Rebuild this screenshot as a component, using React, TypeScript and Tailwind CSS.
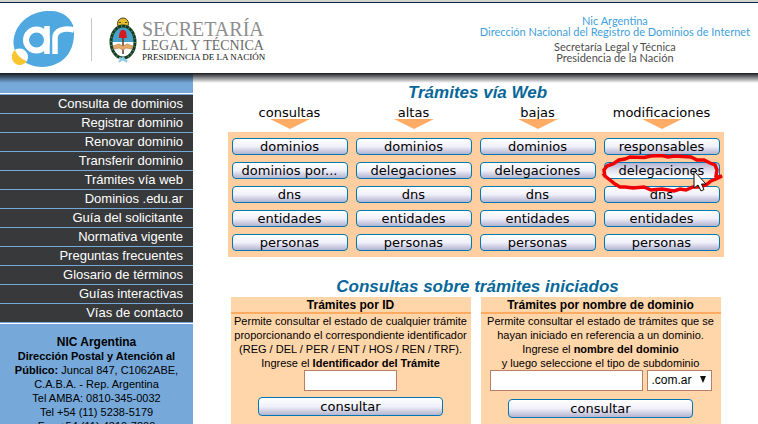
import React from "react";

const menu = [
  "Consulta de dominios",
  "Registrar dominio",
  "Renovar dominio",
  "Transferir dominio",
  "Trámites vía web",
  "Dominios .edu.ar",
  "Guía del solicitante",
  "Normativa vigente",
  "Preguntas frecuentes",
  "Glosario de términos",
  "Guías interactivas",
  "Vías de contacto",
];

const columns = [
  { title: "consultas", items: ["dominios", "dominios por...", "dns", "entidades", "personas"] },
  { title: "altas", items: ["dominios", "delegaciones", "dns", "entidades", "personas"] },
  { title: "bajas", items: ["dominios", "delegaciones", "dns", "entidades", "personas"] },
  { title: "modificaciones", items: ["responsables", "delegaciones", "dns", "entidades", "personas"] },
];

function ArLogo() {
  return (
    <svg width="64" height="58" viewBox="0 0 64 58" role="img" aria-label=".ar" className="shrink-0">
      <path d="M35 0C49 -1 60 6 62 18C63 36 56 51 38 55C20 59 3 49 1.500 33C1 15 16 1 35 0Z" fill="#4fa8df" />
      <circle cx="7.500" cy="46" r="8.500" fill="#fff" />
      <path d="M3 39C-2 43 -1 51 5 53.500C9 55 13 53 15 50C9 48 5 44 3 39Z" fill="#fbc530" />
      <g fill="none" stroke="#fff" strokeWidth="5.500">
        <circle cx="24.500" cy="29" r="10.500" strokeWidth="6" />
        <line x1="35" y1="15" x2="35" y2="43" />
        <path d="M43 43V27C43 20 51 16 62 19" />
      </g>
    </svg>
  );
}

function CoatOfArms() {
  return (
    <svg width="28" height="46" viewBox="0 0 28 46" role="img" aria-label="Escudo nacional" className="shrink-0">
      <circle cx="14" cy="6.500" r="5.500" fill="#e8bd2c" stroke="#4b421d" />
      <path d="M10 5.500h2M16 5.500h2M12 8.500h4" stroke="#5a4514" />
      <ellipse cx="14" cy="25" rx="12" ry="16" fill="#fff" />
      <path d="M2 25C2 15 8 9 14 9S26 15 26 25Z" fill="#46a2cb" />
      <ellipse cx="14" cy="25" rx="12" ry="16" fill="none" stroke="#173c26" strokeWidth="3" />
      <ellipse cx="14" cy="25" rx="12" ry="16" fill="none" stroke="#4b8a4d" strokeWidth="2" strokeDasharray="1 3" />
      <path d="M14 20V37" stroke="#6a3820" strokeWidth="1.500" />
      <path d="M10 21C10 15 12 12 15 13C18 14 17 17 18 21Z" fill="#d71920" />
      <path d="M4 29L10 27L14 29L18 27L24 29L23 32L17 31L14 33L10 31L5 32Z" fill="#e5a968" stroke="#9e693b" strokeWidth=".5" />
      <path d="M10 45L14 41L18 45M10 41L18 44" fill="none" stroke="#8cc9e7" strokeWidth="2" />
    </svg>
  );
}

function PillButton({ label, tall = false, hot = false }: { label: string; tall?: boolean; hot?: boolean }) {
  return (
    <button
      type="button"
      className={`flex w-full items-center justify-center rounded border border-[#0077b3] bg-linear-to-b font-['DejaVu_Sans',sans-serif] text-[13px] leading-none whitespace-nowrap text-black ${
        tall ? "h-[19px]" : "h-[17px]"
      } ${hot ? "from-[#b4b4d0] via-[#e2e2ef] to-white" : "from-white via-[#f0f0fa] to-[#b4b4d0]"}`}
    >
      {label}
    </button>
  );
}

function Annotation() {
  return (
    <svg
      width="126"
      height="42"
      viewBox="0 0 126 42"
      aria-hidden="true"
      className="pointer-events-none absolute -top-2 -left-1 z-10 max-w-none"
    >
      <path
        d="M5 23L4 16L7 12L13 10L19 6L25 5L30 3L44 3.500L51 2L62 1.500L68 3L75 2L91 3L97 6L104 6L110 9L115 11L117 16L116 22L119 23L122 22L116 25L111 27L106 31L99 33L93 33L86 36L80 35L74 37L62 35L51 36L44 33L33 34L25 33L20 33L15 30L10 26L5 22L3 19"
        fill="none"
        stroke="#f00000"
        strokeWidth="3.500"
        strokeLinejoin="miter"
      />
      <path d="M94 17V34L98 31L101 37L104 35.500L101.500 30H106Z" fill="#fff" stroke="#111" />
    </svg>
  );
}

function Panel({ title, children }: { title: string; children: React.ReactNode }) {
  return (
    <section className="flex-1 bg-[#ffd5aa] pb-3 text-center">
      <h3 className="border-b-2 border-[#ffac62] pt-px text-xs leading-[14px] font-bold">{title}</h3>
      <form className="text-[11px] leading-[14px]" onSubmit={(e) => e.preventDefault()}>
        {children}
      </form>
    </section>
  );
}

export default function App() {
  return (
    <div className="flex h-screen flex-col overflow-hidden bg-white font-['Liberation_Sans',Arial,sans-serif] text-black">
      <header className="relative z-10 flex shrink-0 items-start justify-between border-t-2 border-[#d5d5cc] bg-white">
        <div className="flex h-[71px] w-full items-start justify-between border-t border-[#06254d]">
          <div className="flex items-start pt-2 pl-3">
            <ArLogo />
            <div className="mt-[7px] ml-[15px] h-[43px] w-px bg-[#c7c7c7]" />
            <div className="mt-[6px] ml-[17px]">
              <CoatOfArms />
            </div>
            <div className="mt-2 ml-[5px] font-['Liberation_Serif',serif] whitespace-nowrap">
              <p className="text-xl leading-5 text-[#8e8e8e]">SECRETARÍA</p>
              <p className="text-sm leading-[13px] text-[#6c6c6c]">LEGAL Y TÉCNICA</p>
              <p className="text-[9px] leading-[11px] text-[#111]">PRESIDENCIA DE LA NACIÓN</p>
            </div>
          </div>
          <div className="pt-3 pr-2 text-center font-['Lato',sans-serif] text-[11px] leading-[11px] whitespace-nowrap">
            <p className="text-[#41a0db]">Nic Argentina</p>
            <p className="text-[#41a0db]">Dirección Nacional del Registro de Dominios de Internet</p>
            <p className="mt-1 text-[#4d4d4d]">Secretaría Legal y Técnica</p>
            <p className="text-[#4d4d4d]">Presidencia de la Nación</p>
          </div>
        </div>
        <div className="absolute top-full right-0 left-0 h-[10px] bg-linear-to-b from-[#171a20] to-transparent" />
      </header>

      <div className="flex min-h-0 flex-1">
        <aside className="w-[193px] shrink-0 bg-[#76a9da] pt-5">
          <nav className="border-y border-white pt-px">
            <ul>
              {menu.map((item) => (
                <li key={item} className="border-b border-[#76a9da] bg-[#38393b] pr-[10px] text-right text-[13px] leading-[18px] text-white">
                  <a href="#">{item}</a>
                </li>
              ))}
            </ul>
          </nav>
          <address className="px-3 pt-[11px] text-center text-[11px] leading-[14px] not-italic">
            <strong className="text-xs leading-[14px]">NIC Argentina</strong>
            <br />
            <strong>
              Dirección Postal y Atención al
              <br />
              Público:
            </strong>{" "}
            Juncal 847, C1062ABE,
            <br />
            C.A.B.A. - Rep. Argentina
            <br />
            Tel AMBA: 0810-345-0032
            <br />
            Tel +54 (11) 5238-5179
            <br />
            Fax +54 (11) 4310-7800
          </address>
        </aside>

        <main className="flex-1 pt-[10px]">
          <h2 className="pl-1 text-center text-[17px] leading-5 font-bold text-[#066799] italic">Trámites vía Web</h2>
          <div className="mx-auto w-[496px]">
            <div className="grid grid-cols-4 pt-[3px]">
              {columns.map((c) => (
                <div key={c.title} className="flex flex-col items-center pb-[3px]">
                  <h3 className="font-['DejaVu_Sans',sans-serif] text-[13px] leading-[13px]">{c.title}</h3>
                  <svg width="40" height="10" viewBox="0 0 40 10" aria-hidden="true">
                    <path d="M0 0H40L20 10Z" fill="#ffab66" />
                  </svg>
                </div>
              ))}
            </div>
            <div className="grid grid-cols-4 gap-2 bg-[#ffcfa1] px-1 py-[6px]">
              {columns.map((c, ci) => (
                <div key={c.title} className="flex flex-col gap-[7px]">
                  {c.items.map((label, i) => {
                    const marked = ci === 3 && i === 1;
                    return (
                      <div key={label} className="relative">
                        <PillButton label={label} hot={marked} />
                        {marked && <Annotation />}
                      </div>
                    );
                  })}
                </div>
              ))}
            </div>
          </div>

          <h2 className="mt-5 pl-1 text-center text-[17px] leading-5 font-bold text-[#066799] italic">
            Consultas sobre trámites iniciados
          </h2>
          <div className="mx-auto flex w-[490px] gap-[10px]">
            <Panel title="Trámites por ID">
              <label htmlFor="tramite" className="block">
                Permite consultar el estado de cualquier trámite
                <br />
                proporcionando el correspondiente identificador
                <br />
                (REG / DEL / PER / ENT / HOS / REN / TRF).
                <br />
                Ingrese el <b>Identificador del Trámite</b>
              </label>
              <input id="tramite" type="text" className="mx-auto block h-[21px] w-[93px] border border-[#b87f66] bg-white px-1" />
              <div className="mx-auto mt-[6px] w-[185px]">
                <PillButton label="consultar" tall />
              </div>
            </Panel>
            <Panel title="Trámites por nombre de dominio">
              <label htmlFor="dominio" className="block">
                Permite consultar el estado de trámites que se
                <br />
                hayan iniciado en referencia a un dominio.
                <br />
                Ingrese el <b>nombre del dominio</b>
                <br />y luego seleccione el tipo de subdominio
              </label>
              <div className="flex justify-center gap-1">
                <input id="dominio" type="text" className="h-[21px] w-[153px] border border-[#b87f66] bg-white px-1" />
                <div className="relative">
                  <select
                    aria-label="Subdominio"
                    className="h-[21px] w-[65px] appearance-none border border-[#b87f66] bg-white pl-1 text-xs leading-[19px]"
                  >
                    <option>.com.ar</option>
                  </select>
                  <svg width="6" height="7" viewBox="0 0 6 7" aria-hidden="true" className="pointer-events-none absolute top-[6px] right-[6px]">
                    <path d="M0 0H6L3 7Z" fill="#111" />
                  </svg>
                </div>
              </div>
              <div className="mx-auto mt-2 w-[185px]">
                <PillButton label="consultar" tall />
              </div>
            </Panel>
          </div>
        </main>
      </div>
    </div>
  );
}
